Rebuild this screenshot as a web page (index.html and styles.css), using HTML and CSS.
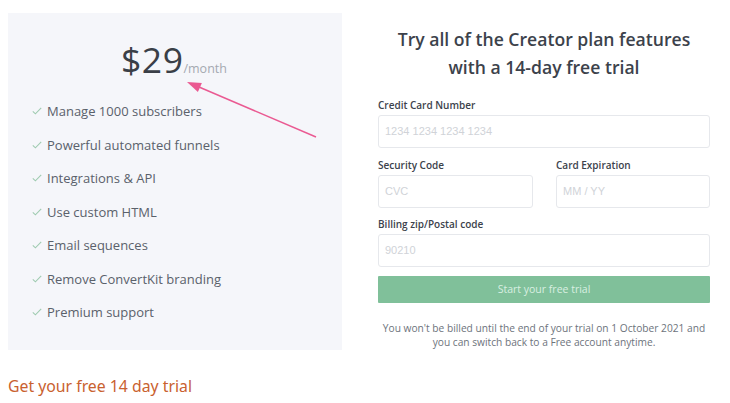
FILE: index.html
```html
<!DOCTYPE html>
<html>
<head>
<meta charset="utf-8">
<link rel="stylesheet" href="styles.css">
</head>
<body>
<div class="wrap">
  <div class="plan">
    <div class="price"><span class="amount">$29</span><span class="per">/month</span></div>
    <ul class="features">
      <li><svg class="check" width="10" height="8" viewBox="0 0 10 8"><path d="M0.8 4.3 L3.4 6.8 L9.2 0.8" fill="none" stroke="#9fcbb0" stroke-width="1.1"/></svg>Manage 1000 subscribers</li>
      <li><svg class="check" width="10" height="8" viewBox="0 0 10 8"><path d="M0.8 4.3 L3.4 6.8 L9.2 0.8" fill="none" stroke="#9fcbb0" stroke-width="1.1"/></svg>Powerful automated funnels</li>
      <li><svg class="check" width="10" height="8" viewBox="0 0 10 8"><path d="M0.8 4.3 L3.4 6.8 L9.2 0.8" fill="none" stroke="#9fcbb0" stroke-width="1.1"/></svg>Integrations &amp; API</li>
      <li><svg class="check" width="10" height="8" viewBox="0 0 10 8"><path d="M0.8 4.3 L3.4 6.8 L9.2 0.8" fill="none" stroke="#9fcbb0" stroke-width="1.1"/></svg>Use custom HTML</li>
      <li><svg class="check" width="10" height="8" viewBox="0 0 10 8"><path d="M0.8 4.3 L3.4 6.8 L9.2 0.8" fill="none" stroke="#9fcbb0" stroke-width="1.1"/></svg>Email sequences</li>
      <li><svg class="check" width="10" height="8" viewBox="0 0 10 8"><path d="M0.8 4.3 L3.4 6.8 L9.2 0.8" fill="none" stroke="#9fcbb0" stroke-width="1.1"/></svg>Remove ConvertKit branding</li>
      <li><svg class="check" width="10" height="8" viewBox="0 0 10 8"><path d="M0.8 4.3 L3.4 6.8 L9.2 0.8" fill="none" stroke="#9fcbb0" stroke-width="1.1"/></svg>Premium support</li>
    </ul>
    <svg class="arrow" width="140" height="70" viewBox="0 0 140 70">
      <line x1="134" y1="59" x2="17" y2="9" stroke="#ea5a92" stroke-width="1.5"/>
      <polygon points="5,4 15.9,14.1 19.9,4.9" fill="#ea5a92"/>
    </svg>
  </div>
  <div class="form">
    <h1 class="title">Try all of the Creator plan features with a 14-day free trial</h1>
    <div class="field">
      <label>Credit Card Number</label>
      <div class="input">1234 1234 1234 1234</div>
    </div>
    <div class="row">
      <div class="field">
        <label>Security Code</label>
        <div class="input">CVC</div>
      </div>
      <div class="field">
        <label>Card Expiration</label>
        <div class="input">MM / YY</div>
      </div>
    </div>
    <div class="field">
      <label>Billing zip/Postal code</label>
      <div class="input">90210</div>
    </div>
    <div class="button">Start your free trial</div>
    <p class="note">You won't be billed until the end of your trial on 1 October 2021 and you can switch back to a Free account anytime.</p>
  </div>
</div>
<a class="trial-link" href="#">Get your free 14 day trial</a>
</body>
</html>
```
FILE: styles.css
```css
html, body {
  margin: 0;
  padding: 0;
  background: #ffffff;
}
body {
  padding: 13px 8px 0 8px;
  font-family: "Open Sans", "Noto Sans", sans-serif;
}
.wrap {
  display: flex;
  align-items: flex-start;
}
.plan {
  position: relative;
  box-sizing: border-box;
  width: 334px;
  height: 337px;
  background: #f5f6fa;
  padding-top: 22px;
}
.price {
  text-align: center;
  padding-right: 2px;
  color: #3a3f47;
  height: 47px;
}
.amount {
  font-size: 35.5px;
  font-weight: 400;
  letter-spacing: 0.5px;
}
.per {
  font-size: 12.5px;
  color: #a4a9b1;
}
.features {
  list-style: none;
  margin: 20px 0 0 0;
  padding: 0 0 0 24px;
}
.features li {
  height: 33.5px;
  font-size: 13px;
  color: #5a616b;
  display: flex;
  align-items: flex-start;
}
.check {
  flex: none;
  margin-top: 5px;
  margin-right: 5px;
}
.arrow {
  position: absolute;
  left: 174px;
  top: 65px;
}
.form {
  width: 332px;
  margin-left: 36px;
  color: #3a3f47;
}
.title {
  margin: 12px 0 16px 0;
  font-size: 17.6px;
  font-weight: 600;
  line-height: 28px;
  text-align: center;
  padding: 0 2px;
  color: #3c424b;
}
.field {
  display: flex;
  flex-direction: column;
  margin-bottom: 8.5px;
}
.field label {
  font-size: 10px;
  font-weight: 600;
  color: #3c424b;
  height: 16px;
  line-height: 16px;
  margin-bottom: 2px;
}
.input {
  box-sizing: border-box;
  height: 33px;
  border: 1px solid #e6e8ec;
  border-radius: 3px;
  background: #fff;
  font-family: "Liberation Sans", Arial, sans-serif;
  font-size: 11px;
  color: #d0d3d8;
  padding: 0 6px;
  line-height: 31px;
}
.row {
  display: flex;
  justify-content: space-between;
}
.row .field {
  width: 155px;
}
.row .field:last-child {
  width: 154px;
}
.button {
  margin-top: 3px;
  height: 27px;
  background: #80c09a;
  color: #d9efe1;
  font-size: 10.5px;
  text-align: center;
  line-height: 27px;
  border-radius: 1px;
}
.note {
  margin: 18px 0 0 0;
  font-size: 10.2px;
  line-height: 14px;
  color: #6d737c;
  text-align: center;
}
.trial-link {
  display: block;
  margin-top: 25px;
  font-family: "Noto Sans", "Open Sans", sans-serif;
  font-size: 15.8px;
  color: #c9612f;
  text-decoration: none;
}
```
